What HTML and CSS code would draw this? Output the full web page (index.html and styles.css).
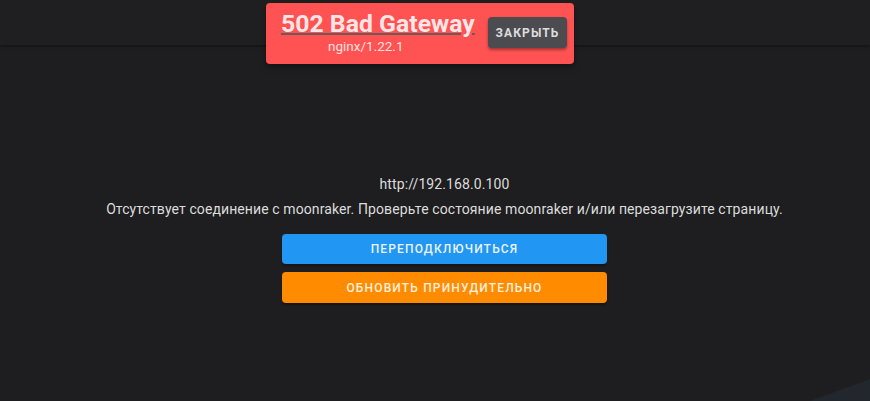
FILE: index.html
```html
<!DOCTYPE html>
<html lang="ru">
<head>
    <meta charset="UTF-8">
    <meta name="viewport" content="width=device-width, initial-scale=1.0">
    <title>Mainsail</title>
    <link rel="stylesheet" href="styles.css">
</head>
<body>
    <header class="app-bar"></header>

    <main class="connect">
        <div class="connect-box">
            <p class="host">http://192.168.0.100</p>
            <p class="message">Отсутствует соединение с moonraker. Проверьте состояние moonraker и/или перезагрузите страницу.</p>
            <button class="btn btn-blue">Переподключиться</button>
            <button class="btn btn-orange">Обновить принудительно</button>
        </div>
    </main>

    <!--уведомление об ошибке-->
    <div class="snackbar">
        <div class="snackbar-text">
            <h1><a href="#">502 Bad Gateway</a></h1>
            <span>nginx/1.22.1</span>
        </div>
        <button class="snackbar-close">Закрыть</button>
    </div>

    <svg class="bg-logo" width="60" height="22" viewBox="0 0 60 22">
        <polygon points="60,0 60,22 0,22" fill="#22262d"/>
    </svg>
</body>
</html>
```

FILE: styles.css
```css
body {
    font-family: Roboto, "Liberation Sans", sans-serif;
    background-color: #1e1e20;
    color: #dcdcdc;
    margin: 0;
    padding: 0;
    height: 401px;
    overflow: hidden;
    position: relative;
}
.app-bar {
    height: 45px;
    background-color: #1f1f21;
    box-shadow: 0 1px 3px rgba(0, 0, 0, 0.45);
}
.connect {
    display: flex;
    justify-content: center;
    padding-top: 129px;
    padding-left: 19px;
}
.connect-box {
    display: flex;
    flex-direction: column;
    align-items: center;
}
.connect-box p {
    margin: 0;
    font-size: 14px;
    line-height: 20px;
    letter-spacing: 0.1px;
}
.connect-box .message {
    margin-top: 5px;
    margin-bottom: 15px;
}
.btn {
    width: 325px;
    height: 30px;
    border: none;
    border-radius: 4px;
    font-family: Roboto, "Liberation Sans", sans-serif;
    font-size: 12px;
    font-weight: 500;
    letter-spacing: 1.15px;
    text-transform: uppercase;
    color: #eaf3fb;
    cursor: pointer;
    box-shadow: 0 2px 2px rgba(0, 0, 0, 0.3);
}
.btn-blue {
    background-color: #2196f3;
}
.btn-orange {
    background-color: #ff8c00;
    margin-top: 8px;
    height: 31px;
    color: #fff0dc;
}
.snackbar {
    position: absolute;
    top: 3px;
    left: 266px;
    width: 308px;
    height: 61px;
    box-sizing: border-box;
    background-color: #ff5252;
    border-radius: 4px;
    box-shadow: 0 3px 6px rgba(0, 0, 0, 0.4);
    display: flex;
    align-items: center;
    padding: 0 7px 0 15px;
}
.snackbar-text {
    flex: 1;
    display: flex;
    flex-direction: column;
    align-items: flex-start;
    margin-top: -3px;
}
.snackbar-text h1 {
    margin: 0;
    font-size: 24.8px;
    line-height: 26px;
    font-weight: 700;
}
.snackbar-text a {
    color: #ffe6e6;
    text-decoration: underline;
    text-decoration-color: #6a5a5a;
    text-underline-offset: 1px;
}
.snackbar-text span {
    margin-left: 47px;
    margin-top: 2px;
    font-size: 13.5px;
    line-height: 14px;
    color: #ffe0e0;
}
.snackbar-close {
    width: 79px;
    height: 31px;
    margin-top: -2px;
    background-color: #4b4b50;
    color: #dddddd;
    border: none;
    border-radius: 4px;
    font-family: Roboto, "Liberation Sans", sans-serif;
    font-size: 12px;
    font-weight: 700;
    letter-spacing: 1.1px;
    text-transform: uppercase;
    box-shadow: 0 2px 3px rgba(0, 0, 0, 0.35);
}
.bg-logo {
    position: absolute;
    right: 0;
    bottom: 0;
    display: block;
}
```
